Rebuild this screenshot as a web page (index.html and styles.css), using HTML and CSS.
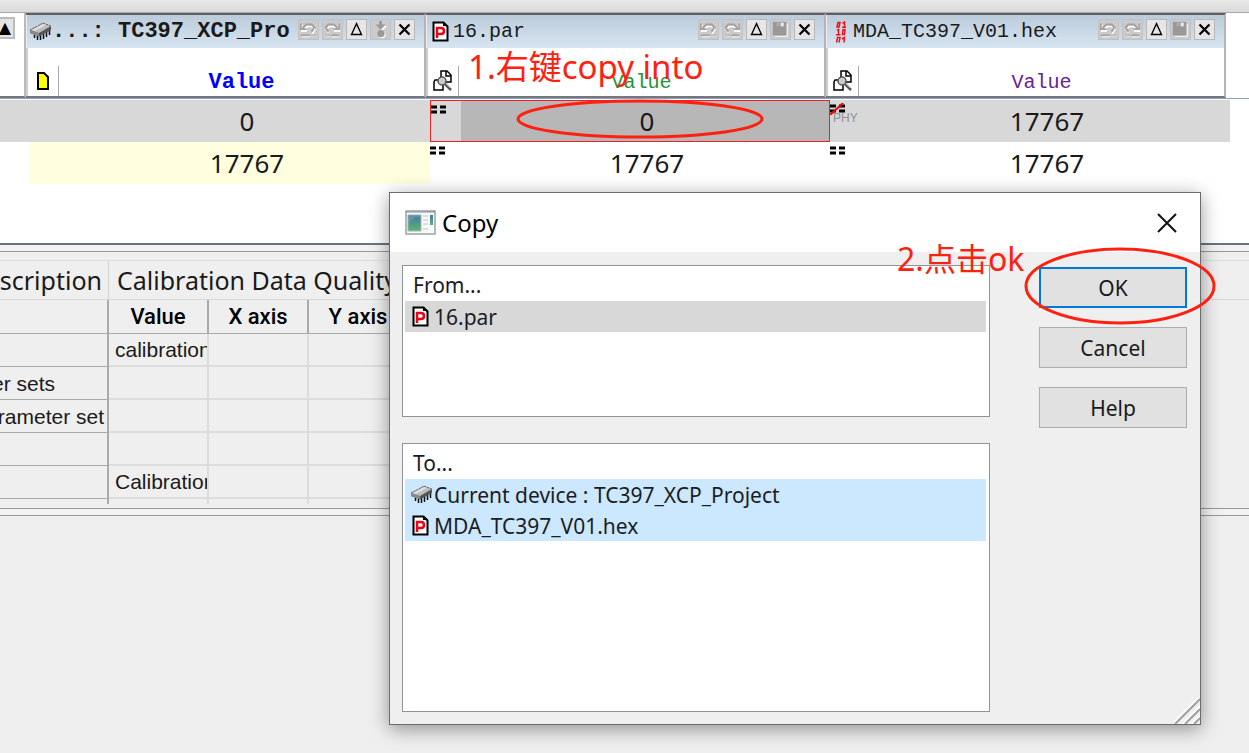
FILE: index.html
```html
<!DOCTYPE html>
<html lang="en">
<head>
<meta charset="utf-8">
<title>Copy</title>
<link rel="stylesheet" href="styles.css">
</head>
<body>
<svg class="defs" width="0" height="0" aria-hidden="true">
  <symbol id="chip" viewBox="0 0 23 20">
    <path d="M5.500 13v3M8.500 14v4M11.500 12v6M14.500 11v6M17.500 9v6M20.500 7v6" stroke="#111" stroke-width="1.500" fill="none"/>
    <path d="M1 8 14 1l8 3v4L10 14.500 1 11z" fill="#555"/>
    <path d="M1 8v3l9 3.500V11z" fill="#888"/>
    <path d="M1 8 14 1l8 3-12 7z" fill="#bdbdbd"/>
    <path d="M3 8 14 2l3 1-11 6z" fill="#dedede"/>
    <path d="M1 8 14 1l8 3" stroke="#666" stroke-dasharray="2 1" fill="none"/>
  </symbol>
  <symbol id="par" viewBox="0 0 17 21">
    <path d="M1.500 1.500h10l4 4v14h-14z" fill="#fff" stroke="#000" stroke-width="2"/>
    <path d="M11 1v4h5" fill="#000"/>
    <path d="M5 17V7h4c4 0 4 6 0 6H5" fill="none" stroke="#f00014" stroke-width="2.500"/>
  </symbol>
  <symbol id="hex" viewBox="0 0 12 22">
    <g fill="none" stroke="#f0101c" stroke-width="1.500">
      <path d="M3 1.500h2L4 6H2zM7.500 2.500 9.500 1v5M7 6.300h4M2 9.500 3.500 8.500V13.500M1 13.700h4.500M8 8.800h2l-.5 4.700H7.500zM1.500 21.500l1-5h2.500l-1 5M7 18l2.500-1.500-.5 5"/>
    </g>
  </symbol>
  <symbol id="search" viewBox="0 0 20 22">
    <path d="M8 7V1h6l4 4v7h-5M13 1v5h5M7 10H2l-1 2v8h9v-5" fill="#fff" stroke="#000" stroke-width="1.500"/>
    <circle cx="9" cy="11" r="4" fill="#ccc" stroke="#555" stroke-width="1.500"/>
    <path d="m12 14 6 6" stroke="#555" stroke-width="2.500"/>
    <path d="m13 14 4 4" stroke="#99c"/>
  </symbol>
  <symbol id="undo" viewBox="0 0 21 21">
    <g fill="none" stroke="#fff" stroke-width="2"><path d="M3 5v7h6M5 11l4-4h6l2 3-2 5M3 18h9M14 18h1M17 18h1"/></g>
    <g fill="none" stroke="#a0a0a0" stroke-width="2"><path d="M2 4v6h6M4 9l4-4h6l3 3-3 5M2 17h10M14 17h1M17 17h1"/></g>
  </symbol>
  <symbol id="redo" viewBox="0 0 21 21">
    <g fill="none" stroke="#fff" stroke-width="2"><path d="M18 5v7h-6M16 11l-4-4H7L4 10l2 4M3 18h1M6 18h1M9 18h9"/></g>
    <g fill="none" stroke="#a0a0a0" stroke-width="2"><path d="M18 4v6h-6M16 9l-4-4H6L3 8l3 5M3 17h1M6 17h1M9 17h9"/></g>
  </symbol>
  <symbol id="delta" viewBox="0 0 21 21"><path d="M10.500 4 16 16H5z" fill="none" stroke="#000" stroke-width="1.500"/></symbol>
  <symbol id="close" viewBox="0 0 21 21"><path d="m5 5 11 11M16 5 5 16" stroke="#000" stroke-width="2.500"/></symbol>
  <symbol id="save" viewBox="0 0 21 21"><path d="M4 18h14V4" fill="none" stroke="#fff"/><path d="M2 2h15v15H2z" fill="#999"/><path d="M6 2h8v5H6z" fill="#aaa"/><path d="M11 3h3v4h-3z" fill="#eee"/></symbol>
  <symbol id="down" viewBox="0 0 21 21"><path d="M11 2v6M7 7h10l-5 5z" stroke="#fff" stroke-width="1" fill="#fff"/><path d="M9 1h3v4h4l-5.500 6L5 5h4z" fill="#999"/><circle cx="12" cy="16" r="4" fill="#fff"/><circle cx="11" cy="15" r="4" fill="#999"/></symbol>
  <symbol id="equal" viewBox="0 0 18 10"><path d="M1 2h6M10 2h6M1 7h6M10 7h6" stroke="#000" stroke-width="3"/></symbol>
</svg>

<main class="app">
  <div class="strip"></div>
  <section class="compare">
    <div class="heads">
      <div class="stub"><button class="up" aria-label="Sort">▲</button></div>
      <section class="head">
        <header class="bar">
          <svg class="chip"><use href="#chip"/></svg>
          <h2 class="name strong">...: TC397_XCP_Pro</h2>
          <div class="tools">
            <button class="tool off" aria-label="Undo"><svg><use href="#undo"/></svg></button>
            <button class="tool off" aria-label="Redo"><svg><use href="#redo"/></svg></button>
            <button class="tool" aria-label="Difference"><svg><use href="#delta"/></svg></button>
            <button class="tool off" aria-label="Download"><svg><use href="#down"/></svg></button>
            <button class="tool" aria-label="Close"><svg><use href="#close"/></svg></button>
          </div>
        </header>
        <div class="sub">
          <span class="kind"><svg class="page" viewBox="0 0 12 18"><path d="M1 1h6l4 4v12H1z" fill="#ff0" stroke="#000" stroke-width="2"/></svg></span>
          <span class="label strong blue">Value</span>
        </div>
      </section>
      <section class="head">
        <header class="bar">
          <svg class="par"><use href="#par"/></svg>
          <h2 class="name">16.par</h2>
          <div class="tools">
            <button class="tool off" aria-label="Undo"><svg><use href="#undo"/></svg></button>
            <button class="tool off" aria-label="Redo"><svg><use href="#redo"/></svg></button>
            <button class="tool" aria-label="Difference"><svg><use href="#delta"/></svg></button>
            <button class="tool off" aria-label="Save"><svg><use href="#save"/></svg></button>
            <button class="tool" aria-label="Close"><svg><use href="#close"/></svg></button>
          </div>
        </header>
        <div class="sub">
          <span class="kind"><svg class="find"><use href="#search"/></svg></span>
          <span class="label green">Value</span>
        </div>
      </section>
      <section class="head">
        <header class="bar">
          <svg class="hex"><use href="#hex"/></svg>
          <h2 class="name">MDA_TC397_V01.hex</h2>
          <div class="tools">
            <button class="tool off" aria-label="Undo"><svg><use href="#undo"/></svg></button>
            <button class="tool off" aria-label="Redo"><svg><use href="#redo"/></svg></button>
            <button class="tool" aria-label="Difference"><svg><use href="#delta"/></svg></button>
            <button class="tool off" aria-label="Save"><svg><use href="#save"/></svg></button>
            <button class="tool" aria-label="Close"><svg><use href="#close"/></svg></button>
          </div>
        </header>
        <div class="sub">
          <span class="kind"><svg class="find"><use href="#search"/></svg></span>
          <span class="label purple">Value</span>
        </div>
      </section>
    </div>
    <table class="values">
      <colgroup><col class="c-stub"><col class="c-val"><col class="c-val"><col class="c-val"><col></colgroup>
      <tbody>
        <tr class="current">
          <td></td>
          <td><div class="cell">0</div></td>
          <td><div class="cell picked"><svg class="eq"><use href="#equal"/></svg>0</div></td>
          <td><div class="cell"><svg class="eq"><use href="#equal"/><path d="M1 12 14 0" stroke="#f00" stroke-width="2"/></svg><small class="phy">PHY</small>17767</div></td>
          <td class="rest"></td>
        </tr>
        <tr>
          <td></td>
          <td class="working"><div class="cell">17767</div></td>
          <td><div class="cell"><svg class="eq"><use href="#equal"/></svg>17767</div></td>
          <td><div class="cell"><svg class="eq"><use href="#equal"/></svg>17767</div></td>
          <td></td>
        </tr>
      </tbody>
    </table>
  </section>
  <div class="split"></div>
  <section class="details">
    <nav class="tabs">
      <a class="tab first" href="#description">escription</a>
      <a class="tab" href="#quality">Calibration Data Quality</a>
    </nav>
    <div class="sheet">
      <table class="quality" id="quality">
        <colgroup><col class="q-name"><col class="q-val"><col class="q-val"><col class="q-val"></colgroup>
        <thead><tr><th></th><th scope="col">Value</th><th scope="col">X axis</th><th scope="col">Y axis</th></tr></thead>
        <tbody>
          <tr><th></th><td>calibration</td><td></td><td></td></tr>
          <tr><th scope="row"><div class="row-name short">er sets</div></th><td></td><td></td><td></td></tr>
          <tr><th scope="row"><div class="row-name">rameter set</div></th><td></td><td></td><td></td></tr>
          <tr><th></th><td></td><td></td><td></td></tr>
          <tr><th></th><td>Calibration</td><td></td><td></td></tr>
          <tr><th></th><td></td><td></td><td></td></tr>
        </tbody>
      </table>
    </div>
  </section>
  <div class="split low"></div>
</main>

<div class="dialog" role="dialog" aria-labelledby="dialog-title">
  <header class="caption">
    <svg class="window" viewBox="0 0 31 26">
      <defs><linearGradient id="screen" x1="0" y1="0" x2="0" y2="1"><stop offset="0" stop-color="#4278a4"/><stop offset="1" stop-color="#5fb56e"/></linearGradient></defs>
      <path d="M1 1h29v23H1z" fill="#f8f8f8" stroke="#9aa2aa" stroke-width="1.500"/>
      <path d="M1 2h29M22 1h1M25 1h1M28 1h1" stroke="#848e98"/>
      <path d="M3 5h13v16H3z" fill="url(#screen)" stroke="#9bb"/><path d="M4 13c2-4 6-6 11-6V6H4z" fill="#fff" opacity=".15"/>
      <path d="M18 6h5M18 10h5M18 14h5M18 19h5" stroke="#ddd" stroke-width="2"/>
      <path d="M25 5h3v10h-3z" fill="url(#screen)"/>
    </svg>
    <h1 class="title" id="dialog-title">Copy</h1>
    <button class="dismiss" aria-label="Close"><svg viewBox="0 0 20 20"><path d="m1 1 18 18M19 1 1 19" stroke="#111" stroke-width="2"/></svg></button>
  </header>
  <div class="content">
    <div class="lists">
      <section class="list from">
        <h2 class="list-title">From...</h2>
        <ul class="items">
          <li class="item used"><svg class="par"><use href="#par"/></svg>16.par</li>
        </ul>
      </section>
      <section class="list to">
        <h2 class="list-title">To...</h2>
        <ul class="items">
          <li class="item chosen"><svg class="chip"><use href="#chip"/></svg>Current device : TC397_XCP_Project</li>
          <li class="item chosen"><svg class="par"><use href="#par"/></svg>MDA_TC397_V01.hex</li>
        </ul>
      </section>
    </div>
    <div class="actions">
      <button class="action default">OK</button>
      <button class="action">Cancel</button>
      <button class="action">Help</button>
    </div>
  </div>
  <svg class="grip" viewBox="0 0 26 26"><path d="M-1 26 26-1M9 26 26 9M18 26l8-8" stroke="#fff" stroke-width="3"/><path d="M1 26 26 1M11 26l15-15M20 26l6-6" stroke="#a0a0a0" stroke-width="2"/></svg>
</div>

<p class="note one">1.右键copy into</p>
<p class="note two">2.点击ok</p>
<svg class="ring ring-one" viewBox="0 0 248 40"><ellipse cx="124" cy="20" rx="122" ry="18"/></svg>
<svg class="ring ring-two" viewBox="0 0 192 78"><ellipse cx="96" cy="39" rx="94" ry="37"/></svg>
</body>
</html>
```
FILE: styles.css
```css
* { box-sizing: border-box; }
body {
  margin: 0;
  min-height: 100vh;
  position: relative;
  background: #efefef;
  color: #1a1a1a;
  font-family: "Noto Sans", "Noto Sans CJK SC", sans-serif;
  overflow: hidden;
}
h1, h2, p, ul { margin: 0; padding: 0; font-weight: 400; }
ul { list-style: none; }
button { font: inherit; color: inherit; padding: 0; }
svg { display: block; flex: none; }
.defs { position: absolute; }

.strip {
  height: 13px;
  background: linear-gradient(#e9e9e9, #dadada);
  border-bottom: 1px solid #aaa;
}
.compare { background: #fff; height: 230px; }
.heads { display: flex; height: 86px; border-bottom: 1px solid #8ba3c0; }
.stub { width: 26px; border-right: 2px solid #bbb; border-bottom: 2px solid #777; padding-top: 4px; }
.up {
  display: block;
  width: 15px;
  height: 22px;
  border: 2px solid #bbb;
  border-left: 0;
  background: #e4e4e4;
  color: #000;
  font: 16px/16px "DejaVu Sans", sans-serif;
  text-indent: -3px;
  overflow: hidden;
}
.head {
  width: 400px;
  border-top: 2px solid #5e6064;
  border-bottom: 2px solid #74787e;
  border-right: 2px solid #b4b4b4;
}
.bar {
  display: flex;
  align-items: center;
  height: 33px;
  padding: 0 9px 0 5px;
  border-left: 1px solid #eee;
  background: linear-gradient(#bccbda, #d7e5f2);
}
.bar:has(.chip) { padding-left: 2px; }
.chip { width: 23px; height: 20px; }
.par { width: 17px; height: 21px; }
.hex { width: 12px; height: 22px; margin: 0 3px; }
.name {
  flex: 1;
  min-width: 0;
  padding-left: 4px;
  overflow: hidden;
  white-space: nowrap;
  font: 20px/26px "Liberation Mono", monospace;
}
.bar .chip + .name { padding-left: 0; }
.hex + .name { padding-left: 3px; }
.strong.name, .strong.label { font-size: 22px; font-weight: 700; }
.tools { display: flex; gap: 3px; padding-bottom: 4px; }
.tool {
  width: 21px;
  height: 21px;
  border: 1px solid #b9b9b9;
  background: #e6e6e6;
}
.tool svg { width: 19px; height: 19px; }
.tool.off { background: #cbcbcb; border-color: #c1c1c1; }
.sub { display: flex; height: 48px; align-items: flex-end; border-left: 2px solid #ccc; }
.kind {
  width: 31px;
  height: 30px;
  display: flex;
  align-items: center;
  justify-content: center;
  border-right: 1px solid #aaa;
}
.page { width: 12px; height: 18px; }
.find { width: 20px; height: 22px; }
.label { flex: 1; text-align: center; font: 20px/26px "Liberation Mono", monospace; }
.blue { color: #00f; }
.green { color: #219334; }
.purple { color: #65229c; }

.values { width: 100%; table-layout: fixed; border-collapse: collapse; margin-top: 1px; }
.c-stub { width: 30px; }
.c-val { width: 400px; }
.values td { padding: 0; height: 42px; }
.current td { background: #d8d8d8; }
.current .rest { background: #fff; }
.values .working { background: #ffffe0; }
.cell {
  position: relative;
  padding-left: 34px;
  height: 42px;
  text-align: center;
  font-size: 26px;
  line-height: 42px;
}
.picked {
  border: 1px solid #f02020;
  line-height: 40px;
  background: linear-gradient(90deg, #d8d8d8 30px, #b7b7b7 30px);
}
.eq { position: absolute; left: -1px; top: 3px; width: 18px; height: 12px; }
.phy {
  position: absolute;
  left: 3px;
  top: 11px;
  color: #909090;
  font: 12px/15px "Liberation Sans", sans-serif;
}

.split {
  height: 9px;
  border-top: 2px solid #63758a;
  border-bottom: 1px solid #999;
  background: #f2f2f2;
}
.details { padding-top: 8px; }
.tabs { display: flex; height: 40px; border-top: 1px solid #ddd; border-bottom: 1px solid #d6d6d6; }
.tab {
  padding-left: 8px;
  font-size: 25px;
  line-height: 38px;
  color: inherit;
  text-decoration: none;
  white-space: nowrap;
}
.tab.first {
  width: 109px;
  display: flex;
  justify-content: flex-end;
  padding: 0 6px 0 0;
  border-right: 1px solid #d2d2d2;
}
.sheet { height: 204px; overflow: hidden; }
.quality {
  table-layout: fixed;
  width: 409px;
  border-collapse: separate;
  border-spacing: 0;
  font: 21px/28px "Liberation Sans", sans-serif;
}
.q-name { width: 109px; }
.q-val { width: 100px; }
.quality th, .quality td {
  height: 33px;
  padding: 1px 0 0 6px;
  font-weight: 400;
  text-align: left;
  white-space: nowrap;
  overflow: hidden;
  border-right: 2px solid #dcdcdc;
  border-bottom: 2px solid #dcdcdc;
}
.quality tbody th { padding: 1px 0 0; border-right: 2px solid #aaa; border-bottom: 1px solid #aaa; }
.quality thead th {
  height: 34px;
  padding: 0;
  text-align: center;
  font: 500 22px/30px Roboto, sans-serif;
  color: #000;
  border-right: 2px solid #aaa;
  border-bottom: 1px solid #aaa;
}
.row-name { display: flex; justify-content: flex-end; padding-right: 3px; }
.row-name.short { padding-right: 52px; }
.split.low { border-top: 1px solid #999; height: 8px; margin-top: 4px; }

.dialog {
  position: absolute;
  left: 389px;
  right: 48px;
  top: 192px;
  border: 1px solid #6c6c6c;
  background: #efefef;
  box-shadow: 0 4px 18px rgba(0, 0, 0, .4);
}
.caption { display: flex; align-items: center; height: 59px; padding: 0 23px 0 15px; background: #fff; }
.window { width: 31px; height: 26px; }
.title { flex: 1; padding-left: 6px; font-size: 24px; line-height: 32px; color: #000; }
.dismiss { border: 0; background: none; }
.dismiss svg { width: 20px; height: 20px; }
.content { display: flex; gap: 49px; padding: 13px 13px 12px 12px; }
.lists { flex: 1; display: flex; flex-direction: column; gap: 26px; }
.list { padding: 3px 3px 0 2px; background: #fff; border: 1px solid #8e949c; color: #1c1c24; }
.from { height: 152px; }
.to { height: 269px; }
.list-title { padding-left: 8px; font: 21px/32px "Noto Sans", sans-serif; }
.item { display: flex; align-items: center; gap: 5px; height: 31px; padding-left: 7px; font-size: 21px; }
.item .chip { margin-right: -4px; margin-left: -2px; }
.used { background: #d8d8d8; }
.chosen { background: #cce8ff; }
.actions { width: 148px; display: flex; flex-direction: column; gap: 19px; padding-top: 2px; }
.action { height: 41px; border: 1px solid #adadad; background: #e1e1e1; font-size: 21px; line-height: 32px; }
.default { border: 2px solid #0078d7; }
.grip { position: absolute; right: 0; bottom: 0; width: 26px; height: 26px; }

.note { position: absolute; color: #ff2010; font-size: 32px; line-height: 40px; white-space: nowrap; }
.one { left: 468px; top: 47px; font-size: 33px; }
.two { left: 897px; top: 239px; }
.ring { position: absolute; fill: none; stroke: #ff2010; stroke-width: 3; }
.ring-one { left: 516px; top: 99px; width: 248px; height: 40px; }
.ring-two { left: 1024px; top: 247px; width: 192px; height: 78px; }
```
